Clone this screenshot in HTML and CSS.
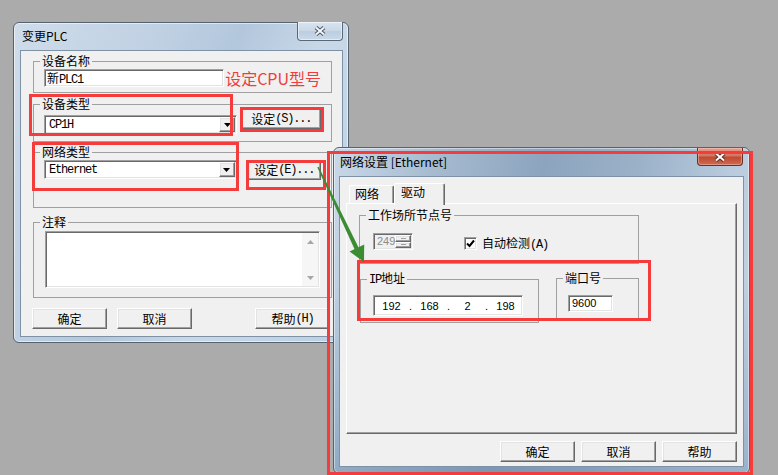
FILE: index.html
```html
<!DOCTYPE html>
<html lang="zh-CN">
<head>
<meta charset="utf-8">
<title>变更PLC</title>
<link rel="stylesheet" href="styles.css">
</head>
<body>
<div class="win win-plc">
  <div class="titlebar">
    <span class="title">变更PLC</span>
    <span class="close close-inactive">
      <svg width="12" height="10" viewBox="0 0 12 10"><path d="M2 1.5 L10 8.5 M10 1.5 L2 8.5" stroke="#4a5868" stroke-width="4"/><path d="M2 1.5 L10 8.5 M10 1.5 L2 8.5" stroke="#f4f6f8" stroke-width="2"/></svg>
    </span>
  </div>
  <div class="client">
    <fieldset class="grp g-name">
      <legend>设备名称</legend>
      <div class="row">
        <div class="edit edit-name"><span>新</span><span class="lat">PLC1</span></div>
        <span class="note">设定CPU型号</span>
      </div>
    </fieldset>
    <fieldset class="grp g-type">
      <legend>设备类型</legend>
      <div class="row">
        <div class="combo"><span class="val lat">CP1H</span><span class="drop"><svg width="7" height="4" viewBox="0 0 7 4"><polygon points="0,0 7,0 3.5,4" fill="#000"/></svg></span></div>
        <div class="btn btn-set-s">设定<span class="lat">(S)...</span></div>
      </div>
    </fieldset>
    <fieldset class="grp g-net">
      <legend>网络类型</legend>
      <div class="row">
        <div class="combo"><span class="val lat">Ethernet</span><span class="drop"><svg width="7" height="4" viewBox="0 0 7 4"><polygon points="0,0 7,0 3.5,4" fill="#000"/></svg></span></div>
        <div class="btn btn-set-e">设定<span class="lat">(E)...</span></div>
      </div>
    </fieldset>
    <fieldset class="grp g-note">
      <legend>注释</legend>
      <div class="memo">
        <div class="vscroll">
          <svg width="7" height="4" viewBox="0 0 7 4"><polygon points="0,4 7,4 3.5,0" fill="#a6a6a6"/></svg>
          <svg width="7" height="4" viewBox="0 0 7 4"><polygon points="0,0 7,0 3.5,4" fill="#a6a6a6"/></svg>
        </div>
      </div>
    </fieldset>
    <div class="btnrow">
      <div class="btn">确定</div>
      <div class="btn btn-gap">取消</div>
      <div class="btn btn-help">帮助<span class="lat">(H)</span></div>
    </div>
  </div>
</div>

<div class="win win-net">
  <div class="titlebar">
    <span class="title">网络设置 [Ethernet]</span>
    <span class="close close-active">
      <svg width="12" height="10" viewBox="0 0 12 10"><path d="M2 1.5 L10 8.5 M10 1.5 L2 8.5" stroke="#5a2a22" stroke-width="4"/><path d="M2 1.5 L10 8.5 M10 1.5 L2 8.5" stroke="#ffffff" stroke-width="2"/></svg>
    </span>
  </div>
  <div class="client">
    <div class="tabs">
      <div class="tab">网络</div>
      <div class="tab sel">驱动</div>
    </div>
    <div class="panel">
      <fieldset class="grp g-node">
        <legend>工作场所节点号</legend>
        <div class="row">
          <div class="spin"><span class="spin-val num">249</span><span class="spin-btns"><span class="sb"><i></i></span><span class="sb"><i></i></span></span></div>
          <span class="chk"><svg width="9" height="9" viewBox="0 0 9 9"><path d="M1 4.5 L3.5 7 L8 1.5" stroke="#000" stroke-width="2" fill="none"/></svg></span>
          <span class="chk-label">自动检测<span class="lat">(A)</span></span>
        </div>
      </fieldset>
      <div class="grprow">
        <fieldset class="grp g-ip">
          <legend><span class="lat">IP</span>地址</legend>
          <div class="ipbox num">
            <span class="oct">192</span><span class="dot">.</span><span class="oct">168</span><span class="dot">.</span><span class="oct">2</span><span class="dot">.</span><span class="oct">198</span>
          </div>
        </fieldset>
        <fieldset class="grp g-port">
          <legend>端口号</legend>
          <div class="edit edit-port num">9600</div>
        </fieldset>
      </div>
    </div>
    <div class="btnrow2">
      <div class="btn">确定</div>
      <div class="btn">取消</div>
      <div class="btn">帮助</div>
    </div>
  </div>
</div>

<div class="mark mk-type"></div>
<div class="mark mk-sets"></div>
<div class="mark mk-net"></div>
<div class="mark mk-sete"></div>
<div class="mark mk-win"></div>
<div class="mark mk-ip"></div>

<svg class="arrow" width="778" height="475" viewBox="0 0 778 475">
  <polygon points="318.7,166.7 317.3,167.3 354.7,249.5 358.7,247.7" fill="#3c8c34"/>
  <polygon points="364,262 364.2,244.6 349.6,251.6" fill="#3c8c34"/>
</svg>
</body>
</html>
```

FILE: styles.css
```css
* { box-sizing: border-box; }
html, body { margin: 0; padding: 0; }
body {
  position: relative;
  width: 778px;
  height: 475px;
  overflow: hidden;
  background: #ababab;
  font-family: "Noto Sans CJK SC", "Noto Sans", sans-serif;
  font-size: 12px;
  line-height: 14px;
  color: #000;
}

.lat {
  font-family: "Liberation Mono", "DejaVu Sans Mono", monospace;
  font-size: 12px;
  letter-spacing: -1.2px;
}
.num {
  font-family: "Liberation Sans", Arial, sans-serif;
  font-size: 11px;
}

/* windows */
.win {
  position: absolute;
  display: flex;
  flex-direction: column;
  border: 1px solid #56636f;
  border-radius: 6px;
}
.win-plc {
  left: 13px;
  top: 22px;
  width: 336px;
  height: 321px;
  padding: 0 5px 5px 6px;
  background: linear-gradient(115deg, #cfdcea 0%, #c0d1e3 30%, #b3c7dc 48%, #c8d8e8 66%, #bcd0e3 100%);
  box-shadow: inset 0 0 0 1px rgba(255,255,255,0.55);
}
.win-net {
  left: 333px;
  top: 147px;
  width: 417px;
  height: 327px;
  padding: 0 5px 6px 5px;
  background:
    linear-gradient(to bottom, rgba(120,150,180,0) 40%, rgba(100,135,170,0.45) 100%),
    linear-gradient(100deg, #c9d8e8 0%, #a6bbd0 22%, #8ca4be 45%, #9ab1c8 65%, #b9cbdd 85%, #c5d5e6 100%);
  box-shadow: inset 0 0 0 1px rgba(255,255,255,0.45);
  z-index: 2;
}

.titlebar {
  display: flex;
  align-items: flex-start;
  flex: none;
}
.win-plc .titlebar { height: 27px; padding-left: 2px; }
.win-net .titlebar { height: 28px; padding-left: 1px; }
.title {
  padding-top: 5px;
  line-height: 16px;
  white-space: nowrap;
}
.win-net .title { padding-top: 6px; }

.close {
  margin-left: auto;
  display: flex;
  align-items: center;
  justify-content: center;
  width: 46px;
  border: 1px solid #5b6977;
  border-top: none;
  border-radius: 0 0 4px 4px;
}
.close-inactive {
  height: 19px;
  margin-top: -1px;
  background: linear-gradient(#d8e4ef, #c9d8e7 50%, #bccde0 51%, #c9d9e8);
  box-shadow: inset 0 0 0 1px rgba(255,255,255,0.5);
}
.close-active {
  height: 18px;
  margin-right: 1px;
  border-color: #6a2f25;
  background: linear-gradient(#e6a08e, #d27660 45%, #c04a32 55%, #cf6a52);
  box-shadow: inset 0 0 0 1px rgba(255,220,210,0.4);
}

.client {
  flex: 1;
  background: #f0f0f0;
  border: 1px solid #7f91a4;
  display: flex;
  flex-direction: column;
  align-items: flex-start;
}
.win-plc .client { padding: 3px 0 0 11px; }
.win-net .client { padding: 6px 6px 0 6px; }

/* group boxes */
.grp {
  margin: 0;
  padding: 0;
  min-width: 0;
  border: 1px solid #a0a0a0;
}
.grp legend {
  padding: 0 2px;
  line-height: 14px;
  white-space: nowrap;
}
.row { display: flex; align-items: flex-start; }

.g-name { margin-left: 1px; width: 299px; padding: 1px 10px 5px 10px; }
.g-type { margin: 4px 0 0 1px; width: 299px; padding: 4px 10px 7px 10px; }
.g-net  { margin: 3px 0 0 1px; width: 299px; padding: 1px 10px 27px 10px; }
.g-note { margin: 7px 0 0 1px; width: 299px; padding: 2px 10px 9px 11px; }
.g-name legend, .g-type legend, .g-net legend { margin-left: -4px; }
.g-note legend { margin-left: -5px; }

/* classic controls */
.edit, .combo, .memo, .spin, .ipbox, .chk {
  background: #fff;
  border: 1px solid;
  border-color: #a0a0a0 #ffffff #ffffff #a0a0a0;
  box-shadow: inset 1px 1px 0 #696969, inset -1px -1px 0 #e3e3e3;
}
.edit {
  height: 18px;
  padding-left: 2px;
  line-height: 16px;
  white-space: nowrap;
}
.edit-name { width: 193px; }
.note {
  margin-left: 1px;
  color: #ef3d3d;
  font-size: 16px;
  line-height: 18px;
  white-space: nowrap;
}

.combo {
  display: flex;
  width: 194px;
  height: 19px;
  padding: 1px;
}
.combo .val {
  flex: 1;
  padding-left: 3px;
  line-height: 16px;
}
.drop, .btn, .sb {
  background: #f0f0f0;
  border: 1px solid;
  border-color: #ffffff #696969 #696969 #ffffff;
  box-shadow: inset -1px -1px 0 #a0a0a0, inset 1px 1px 0 #e3e3e3;
}
.drop {
  width: 16px;
  display: flex;
  align-items: center;
  justify-content: center;
}

.btn {
  display: flex;
  align-items: center;
  justify-content: center;
  width: 75px;
  height: 21px;
  white-space: nowrap;
}
.btn-set-s { width: 80px; margin: -7px 0 0 4px; }
.btn-set-e { width: 74px; height: 20px; margin-left: 11px; }

.memo {
  width: 275px;
  height: 57px;
  padding: 1px;
  display: flex;
  justify-content: flex-end;
}
.vscroll {
  width: 16px;
  background: #f6f6f6;
  display: flex;
  flex-direction: column;
  justify-content: space-between;
  align-items: center;
  padding: 7px 0 6px;
}
.vscroll svg { display: block; }

.btnrow {
  display: flex;
  width: 298px;
  margin-top: 10px;
}
.btn-gap { margin-left: 10px; }
.btn-help { margin-left: auto; }

/* right dialog */
.tabs {
  display: flex;
  align-items: flex-end;
  height: 20px;
  margin-left: 3px;
  position: relative;
  z-index: 1;
}
.tab {
  width: 45px;
  height: 18px;
  padding-left: 5px;
  line-height: 16px;
  background: #f0f0f0;
  border: 1px solid;
  border-color: #ffffff #696969 transparent #ffffff;
  border-bottom: none;
  border-radius: 2px 2px 0 0;
  box-shadow: inset -1px 0 0 #a0a0a0;
}
.tab.sel {
  width: 51px;
  height: 22px;
  margin-bottom: -2px;
  padding-left: 6px;
}

.panel {
  width: 391px;
  height: 231px;
  background: #f0f0f0;
  border: 1px solid;
  border-color: #ffffff #696969 #696969 #ffffff;
  box-shadow: inset -1px -1px 0 #a0a0a0;
  display: flex;
  flex-direction: column;
  align-items: flex-start;
  padding-top: 4px;
}
.g-node { margin-left: 12px; width: 280px; padding: 11px 10px 11px 13px; }
.g-node legend { margin-left: -7px; }

.spin {
  display: flex;
  width: 40px;
  height: 17px;
  padding: 1px;
  background: #f0f0f0;
}
.spin-val {
  flex: 1;
  padding-left: 2px;
  line-height: 13px;
  color: #8c8c8c;
}
.spin-btns {
  width: 16px;
  display: flex;
  flex-direction: column;
}
.sb {
  flex: 1;
  display: flex;
  align-items: center;
  justify-content: center;
}
.sb i {
  display: block;
  width: 5px;
  height: 1px;
  background: #a0a0a0;
}

.chk {
  width: 13px;
  height: 13px;
  margin: 4px 0 0 51px;
  display: flex;
  align-items: center;
  justify-content: center;
}
.chk svg { display: block; }
.chk-label { margin: 3px 0 0 5px; white-space: nowrap; }

.grprow {
  display: flex;
  align-items: flex-start;
  margin: 7px 0 0 13px;
}
.g-ip { width: 179px; padding: 8px 0 6px 12px; }
.g-ip legend { margin-left: -6px; }
.g-port { width: 83px; margin-left: 17px; padding: 10px 0 8px 11px; }
.g-port legend { margin-left: -5px; }

.ipbox {
  display: flex;
  align-items: center;
  width: 150px;
  height: 21px;
  padding: 0 1px;
  overflow: hidden;
}
.oct { width: 33px; text-align: center; flex: none; }
.dot { width: 5px; text-align: center; flex: none; }
.edit-port { width: 45px; height: 17px; line-height: 15px; padding-left: 3px; }

.btnrow2 {
  display: flex;
  justify-content: flex-end;
  gap: 6px;
  width: 391px;
  margin-top: 7px;
}

/* annotations */
.mark {
  position: absolute;
  border: 3px solid #f43c3c;
  z-index: 5;
}
.mk-type { left: 29px; top: 94px; width: 204px; height: 42px; }
.mk-sets { left: 240px; top: 107px; width: 84px; height: 25px; }
.mk-net  { left: 32px; top: 142px; width: 207px; height: 49px; }
.mk-sete { left: 246px; top: 160px; width: 80px; height: 30px; }
.mk-win  { left: 327px; top: 151px; width: 426px; height: 324px; }
.mk-ip   { left: 357px; top: 260px; width: 294px; height: 61px; }

.arrow {
  position: absolute;
  left: 0;
  top: 0;
  z-index: 6;
  pointer-events: none;
}
```
